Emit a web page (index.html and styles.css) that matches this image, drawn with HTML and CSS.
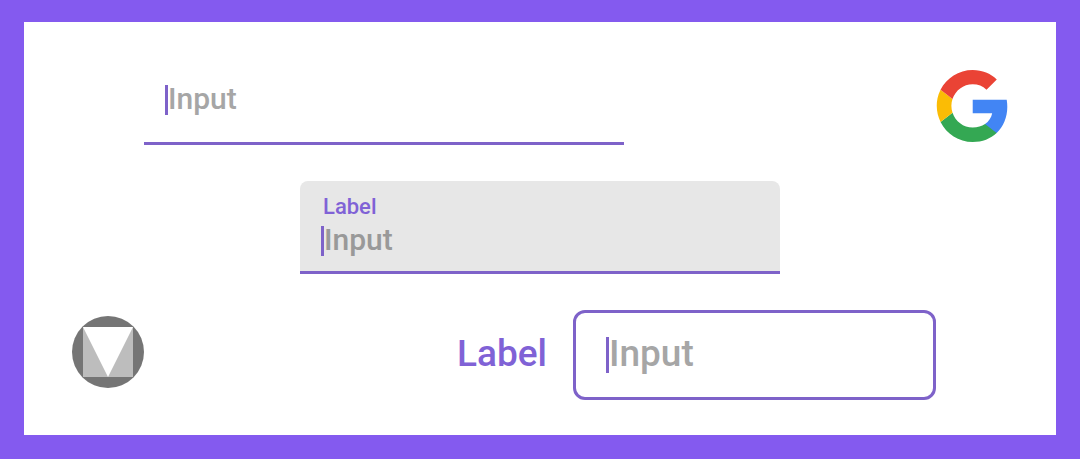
FILE: index.html
```
<!DOCTYPE html>
<html lang="en">
<head>
  <meta charset="UTF-8">
  <meta name="viewport" content="width=device-width, initial-scale=1">
  <title>Text Fields</title>
  <link rel="stylesheet" href="styles.css">
</head>
<body>

  <main class="card">
    <div class="row row-top">
      <div class="field field-line">
        <div class="entry">
          <span class="caret"></span>
          <input type="text" id="lineInput" placeholder="Input" aria-label="Input">
        </div>
      </div>
      <svg class="logo" viewBox="0 0 48 48" role="img" aria-label="Google">
        <path fill="#4285F4" d="M47.532 24.552c0-1.636-.132-3.196-.392-4.712H24.48v9.02h12.98c-.59 2.96-2.26 5.48-4.78 7.18v5.98h7.73c4.52-4.18 7.122-10.32 7.122-17.468z"/>
        <path fill="#34A853" d="M24.48 48c6.48 0 11.92-2.14 15.93-5.98l-7.73-5.98c-2.16 1.44-4.92 2.3-8.2 2.3-6.26 0-11.57-4.22-13.47-9.9L3.03 34.61C7.02 42.55 15.11 48 24.48 48z"/>
        <path fill="#FBBC05" d="M11.01 28.44c-.49-1.44-.76-2.97-.76-4.54s.27-3.1.76-4.54L3.03 13.2A23.9 23.9 0 0 0 .5 23.9c0 3.86.92 7.5 2.53 10.71z"/>
        <path fill="#EA4335" d="M24.48 9.5c3.53 0 6.7 1.22 9.19 3.6l6.85-6.85C36.39 2.38 30.95 0 24.48 0 15.11 0 7.02 5.38 3.03 13.2l7.98 6.16c1.9-5.68 7.21-9.86 13.47-9.86z"/>
      </svg>
    </div>

    <div class="row row-middle">
      <div class="field field-filled">
        <label for="filledInput">Label</label>
        <div class="entry">
          <span class="caret"></span>
          <input type="text" id="filledInput" placeholder="Input">
        </div>
      </div>
    </div>

    <div class="row row-bottom">
      <svg class="logo" viewBox="0 0 72 72" role="img" aria-label="Material Design">
        <circle cx="36" cy="36" r="36" fill="#757575"/>
        <path fill="#bdbdbd" d="M11 11h50v50H11z"/>
        <path fill="#fff" d="M11 11h50L36 61z"/>
      </svg>
      <div class="outlined-group">
        <label for="outlinedInput">Label</label>
        <div class="field field-outlined">
          <div class="entry">
            <span class="caret"></span>
            <input type="text" id="outlinedInput" placeholder="Input">
          </div>
        </div>
      </div>
    </div>
  </main>

</body>
</html>
```
FILE: styles.css
```
* {
  box-sizing: border-box;
}

body {
  margin: 0;
  min-height: 100vh;
  padding: 22px 24px 24px;
  display: flex;
  background: #845aef;
  font-family: Roboto, Arial, sans-serif;
  font-weight: 500;
}

.card {
  flex: 1;
  display: flex;
  flex-direction: column;
  gap: 36px;
  padding: 48px 48px 35px;
  background: white;
}

.row {
  display: flex;
  justify-content: space-between;
  align-items: flex-start;
}

.row-top {
  padding-left: 72px;
}

.row-middle {
  justify-content: center;
}

.row-bottom {
  padding-right: 72px;
}

.row-bottom .logo {
  margin-top: 6px;
}

.logo {
  width: 72px;
  height: 72px;
  flex-shrink: 0;
}

label {
  color: #8062d6;
}

.field {
  width: 100%;
  max-width: 480px;
}

.entry {
  display: flex;
  align-items: center;
  height: 30px;
  font-size: 30px;
}

.caret {
  width: 3px;
  height: 100%;
  flex-shrink: 0;
  background: #7e62c9;
}

input {
  flex: 1;
  min-width: 0;
  height: 40px;
  padding: 0 0 3px;
  border: none;
  outline: none;
  background: none;
  font: inherit;
  color: #555;
}

input::placeholder {
  color: #a6a6a6;
  opacity: 1;
}

.field-line {
  padding: 15px 21px 27px;
  border-bottom: 3px solid #7e62c9;
}

.field-filled {
  padding: 14px 21px 15px;
  border-bottom: 3px solid #7e62c9;
  border-radius: 8px 8px 0 0;
  background: #e7e7e7;
}

.field-filled label {
  display: block;
  margin-bottom: 7px;
  padding-left: 2px;
  font-size: 22px;
  line-height: 24px;
}

.field-filled input::placeholder {
  color: #999;
}

.outlined-group {
  display: flex;
  align-items: center;
  gap: 26px;
}

.outlined-group label {
  padding-bottom: 3px;
  font-size: 37px;
}

.field-outlined {
  max-width: 363px;
  padding: 24px 30px;
  border: 3px solid #7e62c9;
  border-radius: 12px;
}

.field-outlined .entry {
  height: 36px;
  font-size: 37px;
}

.field-outlined input {
  height: 48px;
}
```
